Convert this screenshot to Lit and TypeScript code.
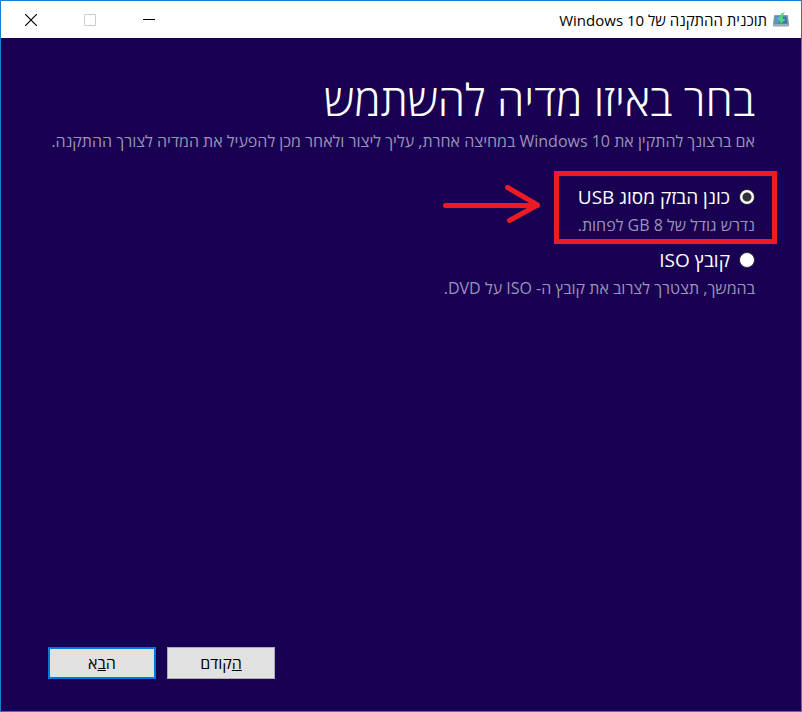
import { LitElement, html, css } from "lit";
import { customElement, state } from "lit/decorators.js";

@customElement("app-root")
export class AppRoot extends LitElement {
  static styles = css`
    :host {
      display: block;
      direction: rtl;
      font-family: "Open Sans", "Noto Sans", "Liberation Sans", sans-serif;
    }
    * {
      box-sizing: border-box;
    }
    .window {
      display: flex;
      flex-direction: column;
      min-height: 100vh;
      border: 1px solid #1a7fd4;
      background: #180052;
      color: #fff;
    }
    .titlebar {
      display: flex;
      align-items: center;
      justify-content: space-between;
      height: 37px;
      background: #fff;
      color: #000;
    }
    .caption {
      display: flex;
      align-items: center;
      gap: 6px;
      padding-right: 12px;
      font-size: 15px;
      line-height: 20px;
      white-space: nowrap;
    }
    .controls {
      display: flex;
      height: 100%;
    }
    .control {
      display: grid;
      place-items: center;
      width: 59px;
      padding: 0;
      border: 0;
      background: none;
    }
    .page {
      flex: 1;
      display: flex;
      flex-direction: column;
      padding: 31px 46px 32px 47px;
    }
    h1 {
      margin: 0 0 2px;
      font-size: 44px;
      line-height: 60px;
      font-weight: 300;
    }
    .text {
      margin: 0;
      font-size: 16px;
      line-height: 20px;
      color: #9d93b8;
    }
    .options {
      margin: 0;
      padding: 32px 0 0;
      border: 0;
      display: grid;
      gap: 11px;
    }
    .option {
      position: relative;
      justify-self: start;
      display: grid;
      gap: 4px;
    }
    .choice {
      display: flex;
      align-items: center;
      gap: 9px;
      font-size: 19px;
      line-height: 28px;
    }
    .radio {
      appearance: none;
      width: 16px;
      height: 16px;
      margin: 0;
      border: 1px solid #2e2a3c;
      border-radius: 50%;
      background: #fff;
    }
    .radio:checked {
      background: radial-gradient(circle, #333 4px, #fff 5px);
    }
    .highlight {
      position: absolute;
      inset: -12px -22px -9px -24px;
      border: 5px solid #ed1c24;
      pointer-events: none;
    }
    .arrow {
      position: absolute;
      left: -135px;
      top: 0;
      pointer-events: none;
    }
    .actions {
      display: flex;
      justify-content: flex-end;
      gap: 11px;
      margin-top: auto;
    }
    .button {
      width: 108px;
      height: 32px;
      padding: 0;
      border: 1px solid #adadad;
      background: #e1e1e1;
      color: #000;
      font-family: inherit;
      font-size: 16px;
      line-height: 20px;
    }
    .primary {
      border: 2px solid #0078d7;
    }
    svg {
      display: block;
    }
  `;

  @state() private media = "usb";

  private pick(value: string) {
    this.media = value;
  }

  render() {
    return html`
      <div class="window">
        <header class="titlebar">
          <div class="caption">
            <svg width="16" height="16" viewBox="0 0 16 16" aria-hidden="true">
              <path d="M1.500 3.500h13l1 9v1.500H.5v-1.500z" fill="#7d8fa0" stroke="#8e9aa4" />
              <path d="M2.500 4.500h11l.8 7H1.700z" fill="#3a78b8" />
              <path d="M2.500 4.500h5l-2 7H1.700z" fill="#5c97cf" />
              <path d="M1 13h14" stroke="#bcc6ce" />
              <path d="M12 .5C8.500.5 6.500 3 6.500 6L4.500 5.500l3.500 6L12.500 7.500 9.800 6.800C9.500 4 10.300 2 12 .5z" fill="#4bdc74" />
            </svg>
            <span>תוכנית ההתקנה של Windows 10</span>
          </div>
          <div class="controls">
            <button class="control" aria-label="מזער">
              <svg width="12" height="12"><path d="M0 5.500h12" stroke="#000" /></svg>
            </button>
            <button class="control" aria-label="הגדל" disabled>
              <svg width="12" height="12"><path d="M.5.5h11v11H.5z" fill="none" stroke="#ccc" /></svg>
            </button>
            <button class="control" aria-label="סגור">
              <svg width="12" height="12"><path d="M0 0l12 12M12 0L0 12" stroke="#000" stroke-width="1.200" /></svg>
            </button>
          </div>
        </header>
        <main class="page">
          <h1>בחר באיזו מדיה להשתמש</h1>
          <p class="text">אם ברצונך להתקין את Windows 10 במחיצה אחרת, עליך ליצור ולאחר מכן להפעיל את המדיה לצורך ההתקנה.</p>
          <fieldset class="options" aria-label="מדיה">
            <div class="option">
              <label class="choice">
                <input class="radio" type="radio" name="media" .checked=${this.media === "usb"} @change=${() => this.pick("usb")} />
                <span>כונן הבזק מסוג USB</span>
              </label>
              <p class="text">נדרש גודל של 8 GB לפחות.</p>
              <div class="highlight"></div>
              <svg class="arrow" width="100" height="44" viewBox="0 0 100 44" aria-hidden="true">
                <path d="M2.500 22.500h92M64.500 4.500l30 17.500L66.500 37.500" fill="none" stroke="#ed1c24" stroke-width="5" stroke-linecap="round" stroke-linejoin="round" />
              </svg>
            </div>
            <div class="option">
              <label class="choice">
                <input class="radio" type="radio" name="media" .checked=${this.media === "iso"} @change=${() => this.pick("iso")} />
                <span>קובץ ISO</span>
              </label>
              <p class="text">בהמשך, תצטרך לצרוב את קובץ ה- ISO על DVD.</p>
            </div>
          </fieldset>
          <footer class="actions">
            <button class="button"><u>ה</u>קודם</button>
            <button class="button primary">ה<u>ב</u>א</button>
          </footer>
        </main>
      </div>
    `;
  }
}
